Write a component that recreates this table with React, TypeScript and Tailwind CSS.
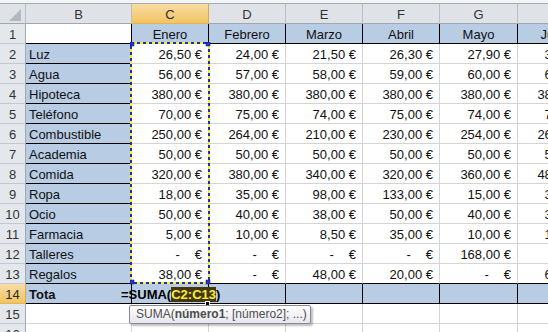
import React from "react";

const colLetters = ["B", "C", "D", "E", "F", "G", "H"];
const colWidths = ["w-[106px]", "w-[77px]", "w-[77px]", "w-[77px]", "w-[77px]", "w-[78px]", "w-[77px]"];
const months = ["Enero", "Febrero", "Marzo", "Abril", "Mayo", "Junio"];

// "-" means an empty accounting value, "" is blank
const expenses: [string, string[]][] = [
  ["Luz", ["26,50", "24,00", "21,50", "26,30", "27,90", "32,00"]],
  ["Agua", ["56,00", "57,00", "58,00", "59,00", "60,00", "62,00"]],
  ["Hipoteca", ["380,00", "380,00", "380,00", "380,00", "380,00", "380,00"]],
  ["Teléfono", ["70,00", "75,00", "74,00", "75,00", "74,00", "74,00"]],
  ["Combustible", ["250,00", "264,00", "210,00", "230,00", "254,00", "260,00"]],
  ["Academia", ["50,00", "50,00", "50,00", "50,00", "50,00", "50,00"]],
  ["Comida", ["320,00", "380,00", "340,00", "320,00", "360,00", "480,00"]],
  ["Ropa", ["18,00", "35,00", "98,00", "133,00", "15,00", "30,00"]],
  ["Ocio", ["50,00", "40,00", "38,00", "50,00", "40,00", "35,00"]],
  ["Farmacia", ["5,00", "10,00", "8,50", "35,00", "10,00", "12,00"]],
  ["Talleres", ["-", "-", "-", "-", "168,00", ""]],
  ["Regalos", ["38,00", "-", "48,00", "20,00", "-", "60,00"]],
];

const RowHead = ({ n, active }: { n: number; active?: boolean }) => (
  <div
    className={`w-[26px] h-[20px] shrink-0 border-r border-b text-center pt-[3px] leading-[16px] ${
      active
        ? "bg-gradient-to-b from-[#f9dca3] to-[#f1c462] border-r-[#e0a93c] border-b-[#e3b354] text-[#2b2b2b]"
        : "bg-[#e4e7ec] border-r-[#9ea7b3] border-b-[#c3c8cf] text-[#333]"
    }`}
  >
    {n}
  </div>
);

const Money = ({ v }: { v: string }) => {
  if (v === "") return null;
  if (v === "-")
    return (
      <span>
        <span className="mr-[15px]">-</span>€
      </span>
    );
  return <span>{v} €</span>;
};

const App = () => {
  return (
    <div className="relative w-[548px] h-[332px] overflow-hidden bg-white font-['Liberation_Sans',Arial,sans-serif] text-[13px] text-[#111]">
      {/* top strip */}
      <div className="h-[4px] bg-[#f3f4f6] border-b border-[#a5acb5]" />

      {/* column headers */}
      <div className="flex whitespace-nowrap">
        <div className="relative w-[26px] h-[20px] shrink-0 bg-[#dfe3e8] border-r border-b border-r-[#b9bec6] border-b-[#9ea7b3]">
          <svg className="absolute left-[9px] top-[5px]" width="12" height="12" viewBox="0 0 12 12">
            <polygon points="12,0 12,12 0,12" fill="#b3b8bf" />
          </svg>
        </div>
        {colLetters.map((c, i) => (
          <div
            key={c}
            className={`${colWidths[i]} h-[20px] shrink-0 text-center border-r border-b pt-[3px] leading-[16px] ${
              c === "C"
                ? "bg-gradient-to-b from-[#f9dca3] to-[#f1c462] border-r-[#e0a93c] border-b-[#e3b354] text-[#2b2b2b]"
                : "bg-[#dfe3e8] border-r-[#b9bec6] border-b-[#9ea7b3] text-[#333]"
            }`}
          >
            {c}
          </div>
        ))}
      </div>

      {/* row 1 */}
      <div className="flex whitespace-nowrap">
        <RowHead n={1} />
        <div className="w-[106px] h-[20px] shrink-0 border-r border-b border-r-black border-b-black" />
        {months.map((m, i) => (
          <div
            key={m}
            className={`${colWidths[i + 1]} h-[20px] shrink-0 bg-[#b8cce4] border-r border-b border-black text-center pt-[3px] leading-[16px]`}
          >
            {m}
          </div>
        ))}
      </div>

      {/* rows 2-13 */}
      {expenses.map(([name, vals], r) => (
        <div key={name} className="flex whitespace-nowrap">
          <RowHead n={r + 2} />
          <div className="w-[106px] h-[20px] shrink-0 bg-[#b8cce4] border-r border-b border-black pl-[3px] pt-[3px] leading-[16px]">
            {name}
          </div>
          {vals.map((v, i) => (
            <div
              key={i}
              className={`${colWidths[i + 1]} h-[20px] shrink-0 border-r border-r-[#d4d4d4] border-b text-right pr-[6px] pt-[3px] leading-[16px] ${
                r === 11 ? "border-b-black" : "border-b-[#d4d4d4]"
              }`}
            >
              <Money v={v} />
            </div>
          ))}
        </div>
      ))}

      {/* row 14 */}
      <div className="flex whitespace-nowrap">
        <RowHead n={14} active />
        <div className="w-[106px] h-[20px] shrink-0 bg-[#b8cce4] border-r border-b border-black pl-[3px] pt-[3px] leading-[16px] font-bold">
          Tota
        </div>
        {months.map((m, i) => (
          <div
            key={m}
            className={`${colWidths[i + 1]} h-[20px] shrink-0 bg-[#b8cce4] border-r border-b border-black`}
          />
        ))}
      </div>

      {/* rows 15-16 */}
      {[15, 16].map((n) => (
        <div key={n} className="flex">
          <RowHead n={n} />
          {colWidths.map((w, i) => (
            <div key={i} className={`${w} h-[20px] shrink-0 border-r border-b border-[#d4d4d4]`} />
          ))}
        </div>
      ))}

      {/* copy range marching ants C2:C13 */}
      <svg className="absolute left-[130px] top-[42px]" width="81" height="244">
        <rect x="1" y="1" width="78" height="240" fill="none" stroke="#f7ef2a" strokeWidth="2" />
        <rect x="1" y="1" width="78" height="240" fill="none" stroke="#1c2fb8" strokeWidth="2" strokeDasharray="3 3" />
        <rect x="0" y="0" width="4" height="4" fill="#2233dd" stroke="#0b1570" strokeWidth="0.5" />
        <rect x="76" y="0" width="4" height="4" fill="#2233dd" stroke="#0b1570" strokeWidth="0.5" />
        <rect x="0" y="238" width="4" height="4" fill="#2233dd" stroke="#0b1570" strokeWidth="0.5" />
        <rect x="76" y="238" width="4" height="4" fill="#2233dd" stroke="#0b1570" strokeWidth="0.5" />
      </svg>

      {/* formula being edited in C14 */}
      <div className="absolute left-[121px] top-[284px] h-[19px] pt-[3px] leading-[16px] font-bold text-black whitespace-nowrap">
        =SUMA(<span className="bg-[#45360f] text-[#f7ee3a]">C2:C13</span>)
      </div>
      <div className="absolute left-[205px] top-[301px] w-[5px] h-[5px] bg-black border border-white" />

      {/* function tooltip */}
      <div className="absolute left-[129px] top-[305px] w-[182px] h-[19px] rounded-[2px] border border-[#8a8a8a] bg-gradient-to-b from-white to-[#e6e7ef] shadow-[2px_2px_2px_rgba(0,0,0,0.25)] pl-[6px] leading-[17px] text-[12px] text-[#4d4d4d] whitespace-nowrap">
        SUMA(<span className="font-bold">número1</span>; [número2]; ...)
      </div>
    </div>
  );
};

export default App;
